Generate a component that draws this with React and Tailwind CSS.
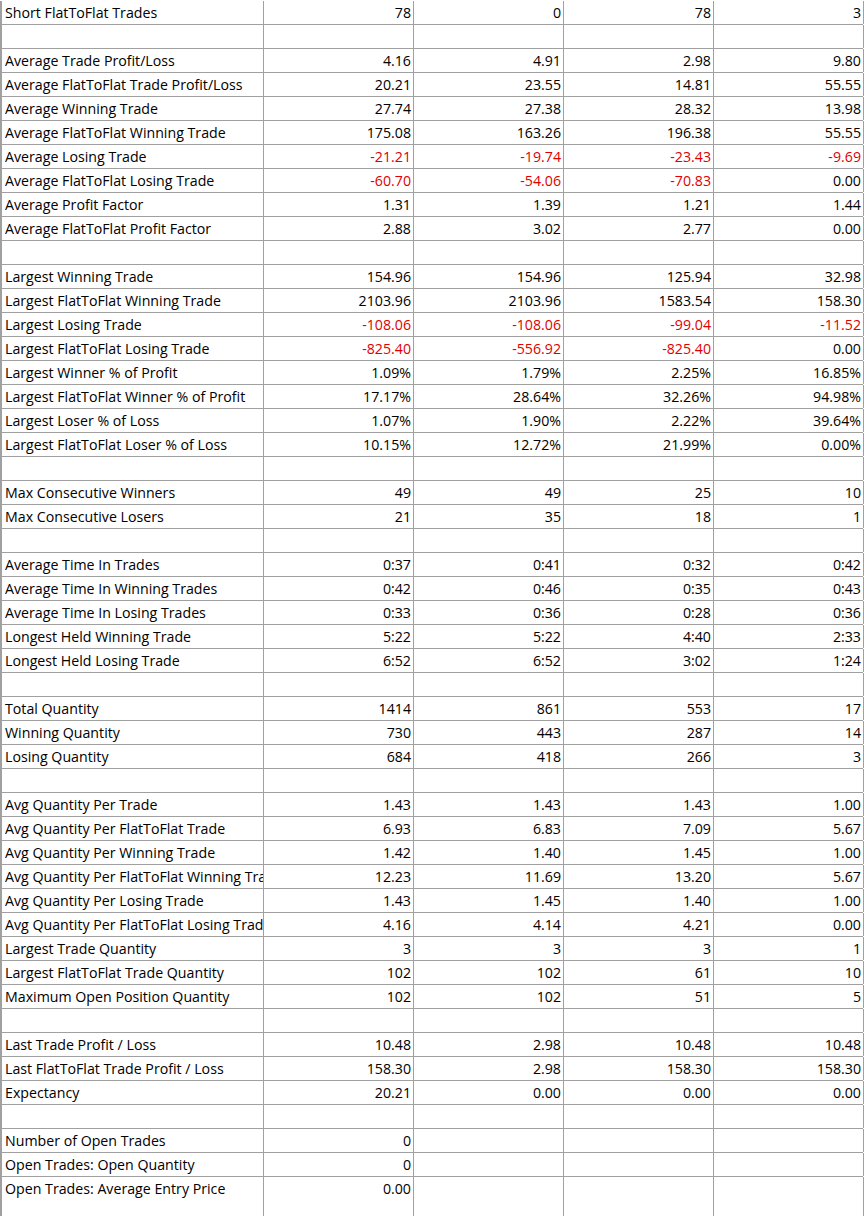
const rows = [
  ["Short FlatToFlat Trades", "78", "0", "78", "3"],
  null,
  ["Average Trade Profit/Loss", "4.16", "4.91", "2.98", "9.80"],
  ["Average FlatToFlat Trade Profit/Loss", "20.21", "23.55", "14.81", "55.55"],
  ["Average Winning Trade", "27.74", "27.38", "28.32", "13.98"],
  ["Average FlatToFlat Winning Trade", "175.08", "163.26", "196.38", "55.55"],
  ["Average Losing Trade", "-21.21", "-19.74", "-23.43", "-9.69"],
  ["Average FlatToFlat Losing Trade", "-60.70", "-54.06", "-70.83", "0.00"],
  ["Average Profit Factor", "1.31", "1.39", "1.21", "1.44"],
  ["Average FlatToFlat Profit Factor", "2.88", "3.02", "2.77", "0.00"],
  null,
  ["Largest Winning Trade", "154.96", "154.96", "125.94", "32.98"],
  ["Largest FlatToFlat Winning Trade", "2103.96", "2103.96", "1583.54", "158.30"],
  ["Largest Losing Trade", "-108.06", "-108.06", "-99.04", "-11.52"],
  ["Largest FlatToFlat Losing Trade", "-825.40", "-556.92", "-825.40", "0.00"],
  ["Largest Winner % of Profit", "1.09%", "1.79%", "2.25%", "16.85%"],
  ["Largest FlatToFlat Winner % of Profit", "17.17%", "28.64%", "32.26%", "94.98%"],
  ["Largest Loser % of Loss", "1.07%", "1.90%", "2.22%", "39.64%"],
  ["Largest FlatToFlat Loser % of Loss", "10.15%", "12.72%", "21.99%", "0.00%"],
  null,
  ["Max Consecutive Winners", "49", "49", "25", "10"],
  ["Max Consecutive Losers", "21", "35", "18", "1"],
  null,
  ["Average Time In Trades", "0:37", "0:41", "0:32", "0:42"],
  ["Average Time In Winning Trades", "0:42", "0:46", "0:35", "0:43"],
  ["Average Time In Losing Trades", "0:33", "0:36", "0:28", "0:36"],
  ["Longest Held Winning Trade", "5:22", "5:22", "4:40", "2:33"],
  ["Longest Held Losing Trade", "6:52", "6:52", "3:02", "1:24"],
  null,
  ["Total Quantity", "1414", "861", "553", "17"],
  ["Winning Quantity", "730", "443", "287", "14"],
  ["Losing Quantity", "684", "418", "266", "3"],
  null,
  ["Avg Quantity Per Trade", "1.43", "1.43", "1.43", "1.00"],
  ["Avg Quantity Per FlatToFlat Trade", "6.93", "6.83", "7.09", "5.67"],
  ["Avg Quantity Per Winning Trade", "1.42", "1.40", "1.45", "1.00"],
  ["Avg Quantity Per FlatToFlat Winning Trade", "12.23", "11.69", "13.20", "5.67"],
  ["Avg Quantity Per Losing Trade", "1.43", "1.45", "1.40", "1.00"],
  ["Avg Quantity Per FlatToFlat Losing Trade", "4.16", "4.14", "4.21", "0.00"],
  ["Largest Trade Quantity", "3", "3", "3", "1"],
  ["Largest FlatToFlat Trade Quantity", "102", "102", "61", "10"],
  ["Maximum Open Position Quantity", "102", "102", "51", "5"],
  null,
  ["Last Trade Profit / Loss", "10.48", "2.98", "10.48", "10.48"],
  ["Last FlatToFlat Trade Profit / Loss", "158.30", "2.98", "158.30", "158.30"],
  ["Expectancy", "20.21", "0.00", "0.00", "0.00"],
  null,
  ["Number of Open Trades", "0", "", "", ""],
  ["Open Trades: Open Quantity", "0", "", "", ""],
  ["Open Trades: Average Entry Price", "0.00", "", "", ""],
];

const Row = ({ data, last }) => {
  const cells = data || ["", "", "", "", ""];
  return (
    <div
      className={`flex h-6 ${last ? "" : "border-b border-[#a0a0a0]"}`}
    >
      <div className="w-[262px] shrink-0 overflow-hidden whitespace-nowrap border-r border-[#a0a0a0] pl-[3px] leading-[23px]">
        {cells[0]}
      </div>
      {cells.slice(1).map((v, i) => (
        <div
          key={i}
          className={`w-[150px] shrink-0 overflow-hidden whitespace-nowrap border-r border-[#a0a0a0] pr-[2px] text-right leading-[23px] ${
            v.startsWith("-") ? "text-[#e00000]" : "text-black"
          }`}
        >
          {v}
        </div>
      ))}
    </div>
  );
};

const App = () => {
  return (
    <div
      className="h-[1216px] w-[864px] overflow-hidden bg-white pt-px text-[14.2px] text-black"
      style={{ fontFamily: '"Open Sans", "Noto Sans", sans-serif' }}
    >
      <div className="w-[863px] border-l-2 border-[#a0a0a0]">
        {rows.map((r, i) => (
          <Row key={i} data={r} last={i === rows.length - 1} />
        ))}
        <div className="flex h-6">
          <div className="w-[262px] shrink-0 border-r border-[#a0a0a0]" />
          <div className="w-[150px] shrink-0 border-r border-[#a0a0a0]" />
          <div className="w-[150px] shrink-0 border-r border-[#a0a0a0]" />
          <div className="w-[150px] shrink-0 border-r border-[#a0a0a0]" />
          <div className="w-[150px] shrink-0 border-r border-[#a0a0a0]" />
        </div>
      </div>
    </div>
  );
};

export default App;
